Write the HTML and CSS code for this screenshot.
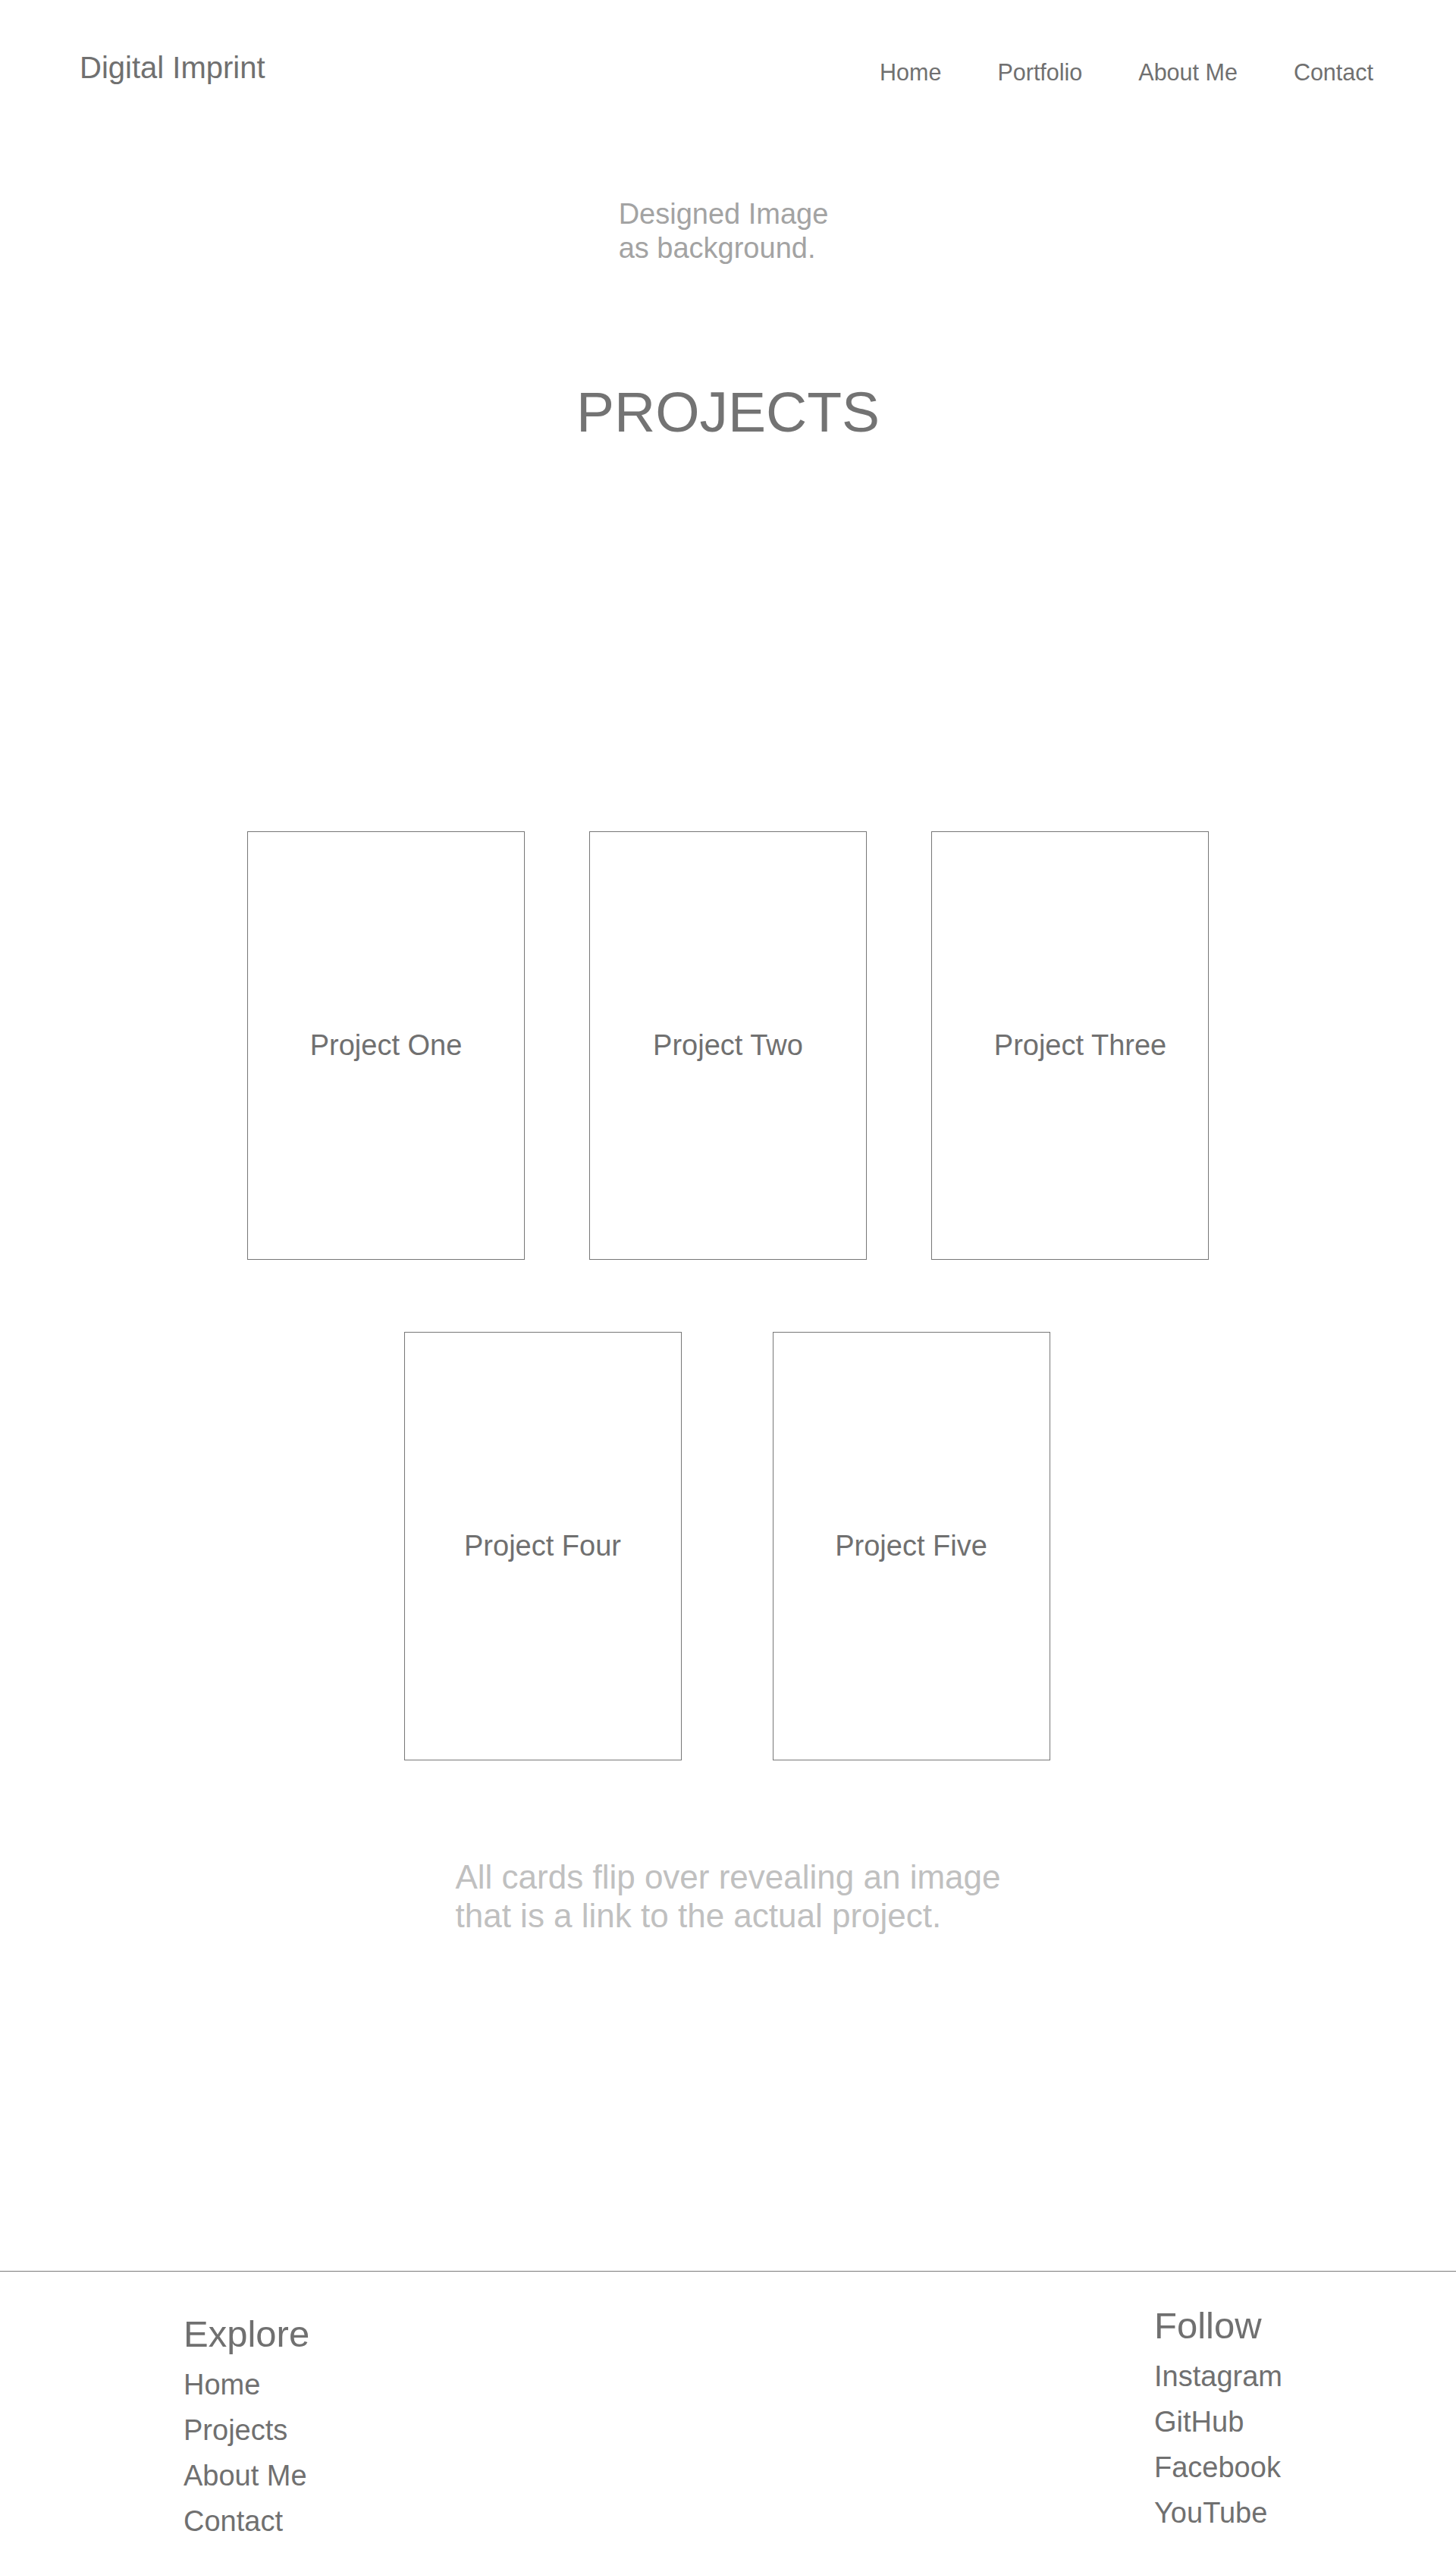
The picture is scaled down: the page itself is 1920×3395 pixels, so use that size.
FILE: index.html
```html
<!DOCTYPE html>
<html lang="en">
<head>
    <meta charset="UTF-8">
    <meta name="viewport" content="width=device-width, initial-scale=1.0">
    <title>Digital Imprint - Projects</title>
    <link rel="stylesheet" href="styles.css">
</head>
<body>

<header class="site-header">
    <div class="logo">Digital Imprint</div>
    <nav class="main-nav">
        <a href="#">Home</a>
        <a href="#">Portfolio</a>
        <a href="#">About Me</a>
        <a href="#">Contact</a>
    </nav>
</header>

<section class="hero">
    <p class="hero-note">Designed Image<br>as background.</p>
    <h1 class="page-title">PROJECTS</h1>
</section>

<main class="projects">
    <div class="card-row">
        <a class="card" href="#">Project One</a>
        <a class="card" href="#">Project Two</a>
        <a class="card card-offset" href="#">Project Three</a>
    </div>
    <div class="card-row card-row-wide">
        <a class="card" href="#">Project Four</a>
        <a class="card" href="#">Project Five</a>
    </div>

    <p class="flip-note">All cards flip over revealing an image<br>that is a link to the actual project.</p>
</main>

<footer class="site-footer">
    <div class="footer-col footer-explore">
        <h2>Explore</h2>
        <a href="#">Home</a>
        <a href="#">Projects</a>
        <a href="#">About Me</a>
        <a href="#">Contact</a>
    </div>
    <div class="footer-col">
        <h2>Follow</h2>
        <a href="#">Instagram</a>
        <a href="#">GitHub</a>
        <a href="#">Facebook</a>
        <a href="#">YouTube</a>
    </div>
</footer>

</body>
</html>
```

FILE: styles.css
```css
body {
    margin: 0;
    font-family: "Liberation Sans", Arial, Helvetica, sans-serif;
    color: #707070;
    background-color: #ffffff;
}
a {
    color: inherit;
    text-decoration: none;
}
.site-header {
    display: flex;
    justify-content: space-between;
    align-items: flex-start;
    padding: 65px 109px 0 105px;
}
.logo {
    font-size: 40px;
    line-height: 48px;
}
.main-nav {
    display: flex;
    gap: 74px;
    margin-top: 12px;
    font-size: 30.5px;
    line-height: 36px;
}
.hero {
    display: flex;
    flex-direction: column;
    align-items: center;
}
.hero-note {
    margin: 147px 12px 0 0;
    font-size: 38px;
    line-height: 45px;
    color: #a3a3a3;
}
.page-title {
    margin: 156px 0 0;
    font-size: 75px;
    line-height: 75px;
    font-weight: normal;
    color: #737373;
}
.projects {
    display: flex;
    flex-direction: column;
    align-items: center;
    padding-top: 515px;
}
.card-row {
    display: flex;
    gap: 85px;
}
.card-row-wide {
    gap: 120px;
    margin: 95px 3px 0 0;
}
.card {
    box-sizing: border-box;
    width: 366px;
    height: 565px;
    border: 1px solid #777777;
    display: flex;
    justify-content: center;
    align-items: center;
    font-size: 38px;
}
.card-offset {
    padding-left: 27px;
}
.flip-note {
    margin: 128px 0 0;
    font-size: 44px;
    line-height: 51px;
    color: #c0c0c0;
}
.site-footer {
    display: grid;
    grid-template-columns: 1fr 398px;
    margin-top: 443px;
    padding: 42px 0 41px 242px;
    border-top: 1px solid #7a7a7a;
}
.footer-col {
    display: flex;
    flex-direction: column;
    align-items: flex-start;
}
.footer-explore {
    padding-top: 11px;
}
.footer-col h2 {
    margin: 0 0 8px;
    font-size: 49px;
    line-height: 58px;
    font-weight: normal;
}
.footer-col a {
    font-size: 38px;
    line-height: 60px;
}
```
